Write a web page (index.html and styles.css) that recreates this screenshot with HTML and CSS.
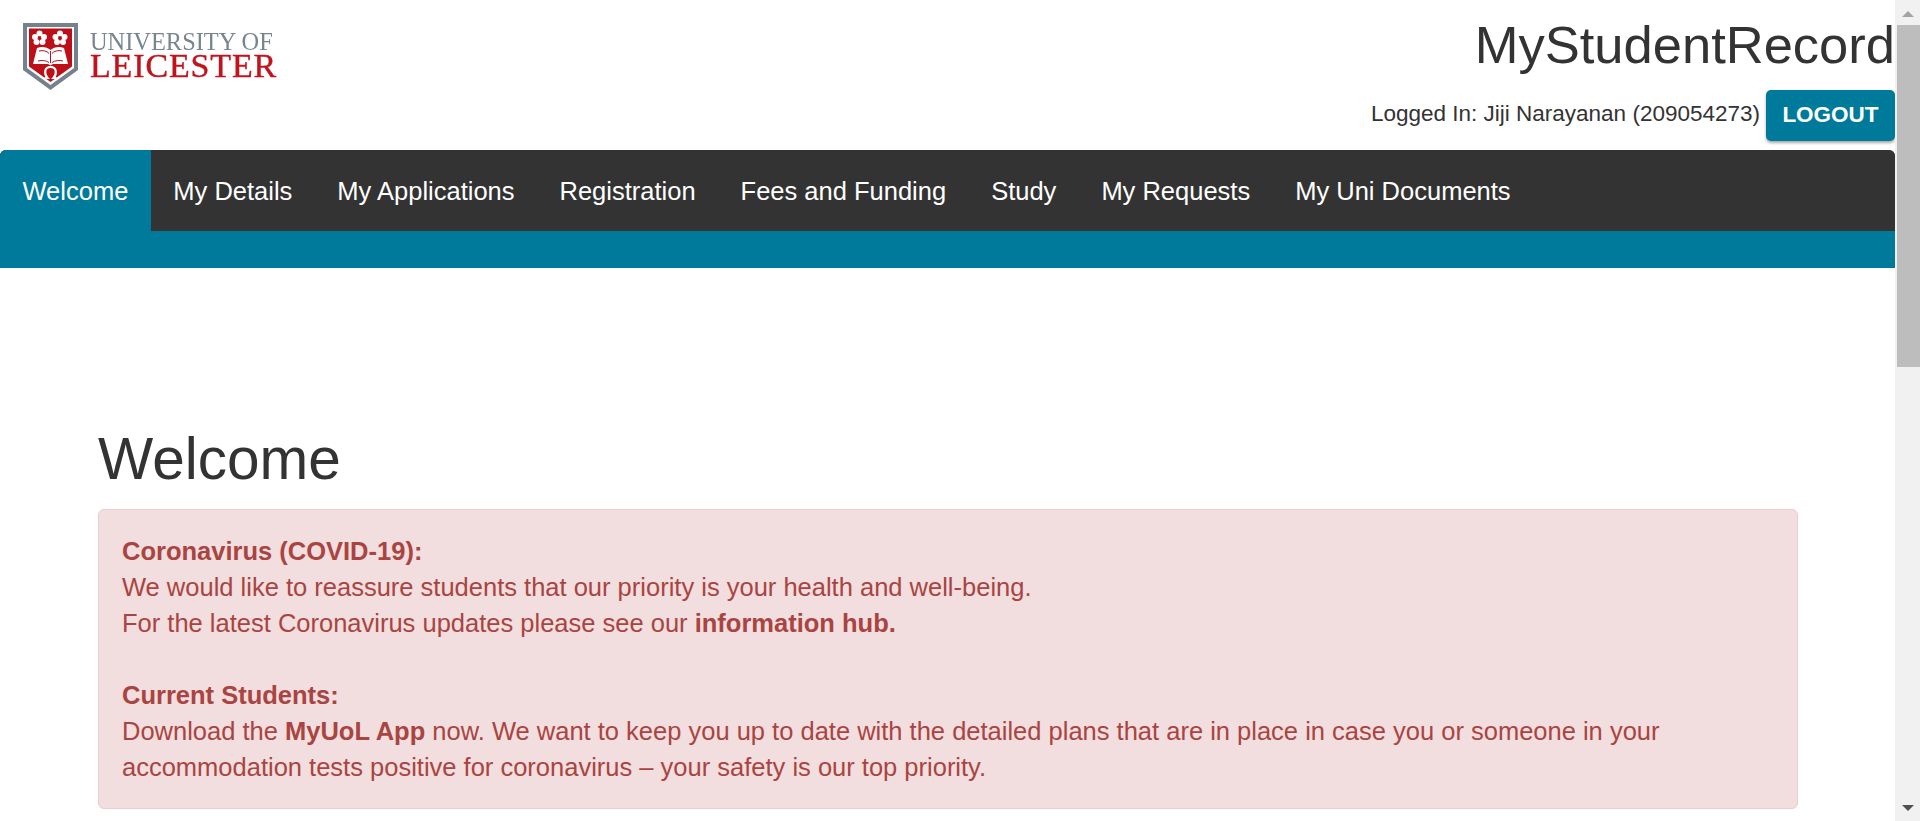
FILE: index.html
```html
<!DOCTYPE html>
<html lang="en">
<head>
<meta charset="utf-8">
<title>MyStudentRecord</title>
<link rel="stylesheet" href="styles.css">
</head>
<body>
<div class="page">
  <header class="top">
    <a class="logo" href="#">
      <svg class="crest" viewBox="0 0 55 67" width="55" height="67" aria-hidden="true">
        <path d="M0 0H55V47L27.5 67L0 47Z" fill="#75828c"/>
        <path d="M4 4H51V45L27.5 62L4 45Z" fill="#fff"/>
        <path d="M6 5.500H49V43.500L27.500 59L6 43.500Z" fill="#bd0f18"/>
        <g fill="#fff">
          <circle cx="16.500" cy="10.500" r="3"/><circle cx="12" cy="14" r="3"/><circle cx="21" cy="14" r="3"/><circle cx="13.500" cy="19" r="3"/><circle cx="19.500" cy="19" r="3"/>
          <circle cx="37" cy="10.500" r="3"/><circle cx="32.500" cy="14" r="3"/><circle cx="41.500" cy="14" r="3"/><circle cx="34" cy="19" r="3"/><circle cx="40" cy="19" r="3"/>
          <path d="M14 25C19 23 24 24 27.500 27C31 24 36 23 41 25L45 41H30L27.500 42.500L25 41H10Z"/>
        </g>
        <circle cx="16.500" cy="15" r="1.700" fill="#bd0f18"/>
        <circle cx="37" cy="15" r="1.700" fill="#bd0f18"/>
        <path d="M27.500 28V40M16 28C20 27 24 28 26 30.500M39 28C35 27 31 28 29 30.500M15 38C19 37 23 37.500 26 39.500M40 38C36 37 32 37.500 29 39.500" stroke="#bd0f18" stroke-width="1" fill="none"/>
        <path d="M21.500 55H24.500C21 51 21 44 27.500 44C34 44 34 51 30.500 55H33.500" stroke="#fff" stroke-width="2.200" fill="none"/>
      </svg>
      <span class="wordmark">
        <span class="wm-top">UNIVERSITY OF</span>
        <span class="wm-main">LEICESTER</span>
      </span>
    </a>
    <div class="account">
      <div class="app-title">MyStudentRecord</div>
      <div class="session">
        <span class="who">Logged In: Jiji Narayanan (209054273)</span>
        <a class="logout" href="#">LOGOUT</a>
      </div>
    </div>
  </header>

  <nav class="nav">
    <ul class="tabs">
      <li><a class="tab active" href="#">Welcome</a></li>
      <li><a class="tab" href="#">My Details</a></li>
      <li><a class="tab" href="#">My Applications</a></li>
      <li><a class="tab" href="#">Registration</a></li>
      <li><a class="tab" href="#">Fees and Funding</a></li>
      <li><a class="tab" href="#">Study</a></li>
      <li><a class="tab" href="#">My Requests</a></li>
      <li><a class="tab" href="#">My Uni Documents</a></li>
    </ul>
    <div class="subbar"></div>
  </nav>

  <main class="content">
    <h1 class="heading">Welcome</h1>
    <div class="alert">
      <strong>Coronavirus (COVID-19):</strong><br>
      We would like to reassure students that our priority is your health and well-being.<br>
      For the latest Coronavirus updates please see our <strong>information hub.</strong><br>
      <br>
      <strong>Current Students:</strong><br>
      Download the <strong>MyUoL App</strong> now. We want to keep you up to date with the detailed plans that are in place in case you or someone in your accommodation tests positive for coronavirus – your safety is our top priority.
    </div>
  </main>
</div>
<div class="scrollbar" aria-hidden="true">
  <span class="arrow up"></span>
  <div class="track"><div class="thumb"></div></div>
  <span class="arrow down"></span>
</div>
</body>
</html>
```
FILE: styles.css
```css
* { box-sizing: border-box; }
html, body { height: 100%; margin: 0; }
body {
  display: flex;
  overflow: hidden;
  background: #fff;
  color: #333;
  font-family: "Liberation Sans", Arial, sans-serif;
  font-size: 25.5px;
  line-height: 36px;
}
a { color: inherit; text-decoration: none; }

.page { flex: 0 0 1895px; width: 1895px; overflow: hidden; }

.top {
  height: 150px;
  display: flex;
  justify-content: space-between;
  align-items: flex-start;
}
.logo { display: flex; margin: 23px 0 0 23px; filter: blur(0.4px); }
.crest { flex: none; display: block; }
.wordmark { display: flex; flex-direction: column; margin-left: 12px; font-family: "Liberation Serif", serif; }
.wm-top { color: #78858f; font-size: 24.4px; line-height: 20px; margin-top: 9px; }
.wm-main { color: #c0141c; font-size: 34px; line-height: 27px; letter-spacing: 0.85px; -webkit-text-stroke: 0.4px #c0141c; }

.account { display: flex; flex-direction: column; align-items: flex-end; }
.app-title { font-size: 52.5px; line-height: 60px; margin: 15px 0 0 0; }
.session { display: flex; align-items: flex-start; margin-top: 15px; }
.who { font-size: 22.5px; line-height: 28px; margin: 10px 6px 0 0; }
.logout {
  display: block;
  width: 129px;
  height: 51px;
  background: #007a9b;
  color: #fff;
  font-size: 22.5px;
  font-weight: bold;
  line-height: 50px;
  text-align: center;
  border-radius: 5px;
  box-shadow: 0 2px 3px rgba(0, 0, 0, 0.35);
}

.nav { border-radius: 6px 6px 0 0; overflow: hidden; background: #007a9b; }
.tabs { display: flex; list-style: none; margin: 0; padding: 0; background: #333; }
.tab { display: block; padding: 22.500px; color: #fff; }
.tab.active { background: #007a9b; }
.subbar { height: 37px; }

.content { padding: 0 97px 0 98px; }
.heading { margin: 0 0 6px; padding-top: 146px; font-size: 58.5px; font-weight: normal; line-height: 89px; }
.alert {
  height: 300px;
  padding: 22.500px 23px;
  background: #f2dede;
  border: 1px solid #ebccd1;
  border-radius: 6px;
  color: #a94442;
}

.scrollbar { flex: 1; display: flex; flex-direction: column; align-items: center; background: #f1f1f1; }
.arrow { flex: none; width: 0; height: 0; border-left: 6px solid transparent; border-right: 6px solid transparent; }
.arrow.up { margin-top: 11px; border-bottom: 6px solid #a3a3a3; }
.arrow.down { margin-bottom: 10px; border-top: 6px solid #505050; }
.track { flex: 1; align-self: stretch; padding: 8px 0 0 2px; }
.thumb { height: 342px; background: #bdbdbd; }
```
